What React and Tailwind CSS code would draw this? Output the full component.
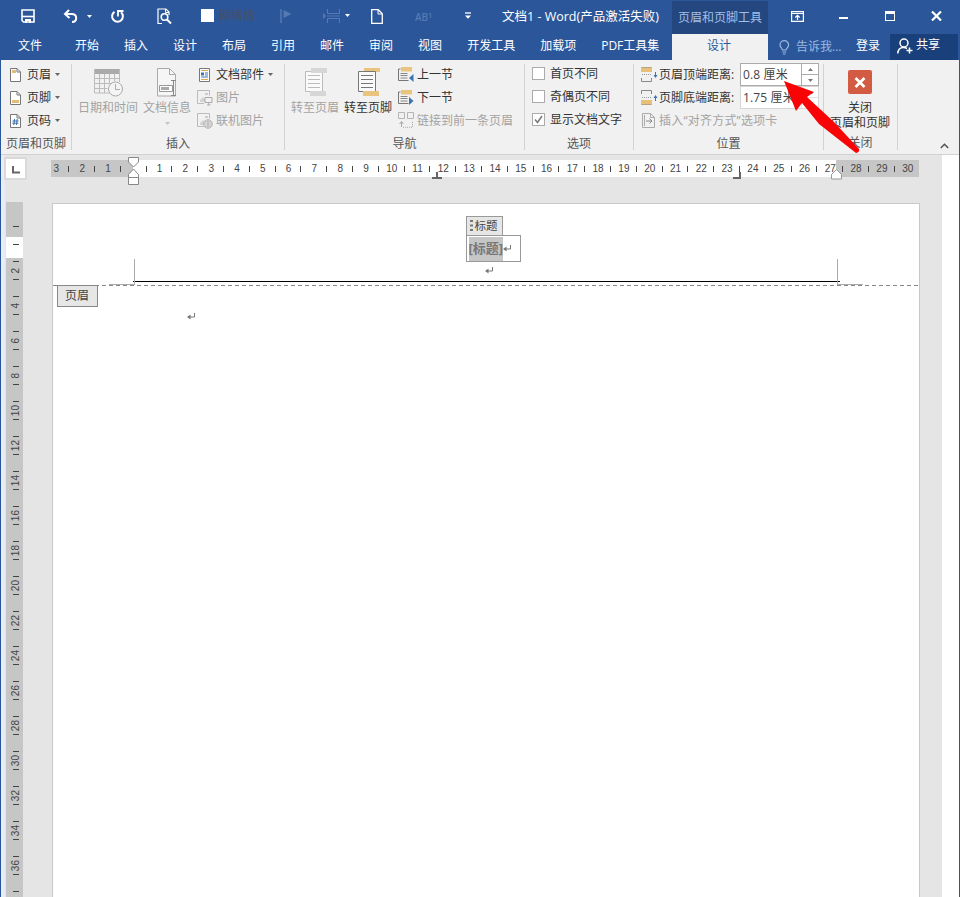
import { useState } from "react";

const tabs = ["开始", "插入", "设计", "布局", "引用", "邮件", "审阅", "视图", "开发工具", "加载项", "PDF工具集"];
const hRuler = Array.from({ length: 34 }, (_, i) => i - 3);
const vRuler = Array.from({ length: 18 }, (_, i) => (i + 1) * 2);

function Svg({ w, h, className = "", children }) {
  return (
    <svg width={w} height={h} viewBox={`0 0 ${w} ${h}`} fill="none" className={`shrink-0 ${className}`}>
      {children}
    </svg>
  );
}

function Caret({ className = "" }) {
  return (
    <Svg w={5} h={3} className={className}>
      <path d="M0 0h5L2.5 3z" fill="currentColor" />
    </Svg>
  );
}

function TitleBar() {
  return (
    <div className="flex h-[34px] items-center text-white">
      {/* Guardar */}
      <Svg w={14} h={14} className="-mt-[2px] ml-[21px]">
        <path d="M1 1h12v12H2.500L1 11.500z" stroke="currentColor" strokeWidth="1.600" />
        <path d="M1 7.500h12" stroke="currentColor" strokeWidth="1.600" />
        <path d="M4 10h6v4H8v-2H6v2H4z" fill="currentColor" />
      </Svg>
      {/* Deshacer */}
      <Svg w={15} h={14} className="-mt-[2px] ml-[28px]">
        <path d="M6 1L2 5l4.500 4M2.500 5h6c3 0 4.700 1.500 4.700 4s-1.700 4-4.200 4" stroke="currentColor" strokeWidth="2" />
      </Svg>
      <Caret className="-mt-[2px] ml-[9px]" />
      <Svg w={15} h={15} className="-mt-[2px] ml-[18px]">
        <path d="M4.500 2.800A5.400 5.400 0 1 0 11 3.200" stroke="currentColor" strokeWidth="2" />
        <path d="M8 7.500V2H13.500" stroke="currentColor" strokeWidth="1.800" />
      </Svg>
      {/* Vista previa */}
      <Svg w={15} h={17} className="-mt-[2px] ml-[32px]">
        <path d="M5 15.500H1V1h8l3 3v3" stroke="currentColor" strokeWidth="1.200" />
        <path d="M8.500 1v3.500H12" stroke="currentColor" />
        <circle cx="7.500" cy="9" r="3.300" stroke="currentColor" strokeWidth="1.600" />
        <path d="M10 11.500l4 4" stroke="currentColor" strokeWidth="2" />
      </Svg>
      <span className="-mt-[3px] ml-[29px] h-[13px] w-[13px] bg-white" />
      <span className="-mt-[2px] ml-[5px] w-[37px] font-medium text-[#45506a]">网格线</span>
      <Svg w={12} h={14} className="-mt-[3px] ml-[24px] text-[#5479b3]">
        <path d="M1 0v14" stroke="currentColor" strokeWidth="1.500" />
        <path d="M3.500 1l8 4-8 4z" fill="currentColor" />
      </Svg>
      <Svg w={18} h={14} className="-mt-[2px] ml-[31px] text-[#5479b3]">
        <path d="M4.500 0v4.500h12V0M4.500 14V9.500h12V14M4 7h13" stroke="currentColor" strokeWidth="1" />
        <path d="M0 4l3 3-3 3z" fill="currentColor" />
      </Svg>
      <Caret className="-mt-[3px] ml-[4px]" />
      <Svg w={12} h={15} className="-mt-[2px] ml-[21px]">
        <path d="M.7.700h6.600l4 4v9.600H.7z" stroke="currentColor" strokeWidth="1.300" />
        <path d="M7 1v4h4" stroke="currentColor" />
      </Svg>
      <span className="ml-[32px] w-[18px] whitespace-nowrap text-[10px] font-semibold text-[#5479b3]">
        AB<sup className="text-[7px]">1</sup>
      </span>
      <Svg w={6} h={8} className="-mt-[2px] ml-[32px]">
        <path d="M0 1h6" stroke="currentColor" strokeWidth="1.300" />
        <path d="M0 3.500h6L3 6.800z" fill="currentColor" />
      </Svg>
      <span className="ml-[31px] w-[170px] pt-px text-[12.500px]">文档1 - Word(产品激活失败)</span>
      <span className="mt-px flex h-[33px] w-[96px] items-center justify-center bg-[#24477f] text-[#a5bfe6]">
        页眉和页脚工具
      </span>
      <Svg w={13} h={11} className="-mt-[2px] ml-[23px]">
        <path d="M.6.600h11.800v9.800H.6zM.6 2.500h11.800" stroke="currentColor" strokeWidth="1.200" />
        <path d="M6.500 9V4.500M4.300 6.500l2.200-2.200 2.200 2.200" stroke="currentColor" strokeWidth="1.200" />
      </Svg>
      <span className="ml-[35px] mt-[2px] h-[2px] w-[9px] bg-white" />
      <span className="-mt-[2px] ml-[37px] h-[10px] w-[10px] border border-t-[3px] border-white" />
      <Svg w={11} h={10} className="-mt-[2px] ml-[36px]">
        <path d="M1 .5l9 9M10 .5l-9 9" stroke="currentColor" strokeWidth="2.200" />
      </Svg>
    </div>
  );
}

function TabRow() {
  return (
    <div className="flex h-[26px] text-white">
      <span className="ml-[17px] w-[57px] leading-[24px]">文件</span>
      <div className="flex w-[597px] gap-[25px] leading-[24px]">
        {tabs.map((t) => (
          <span key={t}>{t}</span>
        ))}
      </div>
      <span className="w-[96px] bg-[#f1f1f1] pr-[2px] text-center leading-[24px] text-[#2b579a]">设计</span>
      <Svg w={11} h={15} className="ml-[11px] mt-[6px] text-[#9db8e0]">
        <path d="M3.500 10c0-1.500-2.500-2.500-2.500-5a4.300 4.300 0 0 1 8.600 0c0 2.500-2.500 3.500-2.500 5zM3.500 12h3.700M4 14h2.500" stroke="currentColor" strokeWidth="1.200" />
      </Svg>
      <span className="ml-[6px] w-[56px] leading-[25px] text-[#9db8e0]">告诉我...</span>
      <span className="ml-[4px] w-[34px] leading-[24px]">登录</span>
      <div className="flex w-[68px] bg-[#19407a]">
        <Svg w={16} h={16} className="ml-[7px] mt-[4px]">
          <circle cx="7" cy="5" r="4" stroke="currentColor" strokeWidth="1.500" />
          <path d="M.8 15.500C1 11.500 3 9.500 6.500 9.500c1.500 0 2.500.400 3.500 1M12.500 9.500v6M9.500 12.500h6" stroke="currentColor" strokeWidth="1.500" />
        </Svg>
        <span className="ml-[3px] leading-[22px]">共享</span>
      </div>
    </div>
  );
}

function Group({ label, className = "", children }) {
  return (
    <div className={`relative flex shrink-0 flex-col pt-[3px] ${className}`}>
      <div className="flex h-[69px]">{children}</div>
      <div className="h-[23px] pr-px text-center leading-[24px] text-[#555]">{label}</div>
      <span className="absolute right-0 top-[4px] h-[86px] w-px bg-[#d2d2d2]" />
    </div>
  );
}

function Row({ icon, children, caret, disabled, gap = "gap-[5px]" }) {
  return (
    <div className={`flex h-[23px] items-center whitespace-nowrap ${gap} ${disabled ? "text-[#a3a3a3]" : "text-[#333]"}`}>
      {icon}
      <span>{children}</span>
      {caret && <Caret className="-ml-px text-[#666]" />}
    </div>
  );
}

function PageIcon({ type }) {
  return (
    <Svg w={11} h={14} className="mr-px">
      <path d="M.5.500h6.500l3.500 3.500v9.500H.5z" fill="#fff" stroke="#777" />
      <path d="M7 .5V4h3.500" stroke="#777" />
      {type === "head" && <path d="M2 2h4v3H2z" fill="#e3bd75" />}
      {type === "foot" && <path d="M2 9h7v3H2z" fill="#e3bd75" />}
      {type === "num" && <path d="M4.500 5L3.800 11M7.200 5l-.7 6M2.500 7h6M2.300 9.200h6" stroke="#3a6ea5" />}
    </Svg>
  );
}

function PictureIcon({ online }) {
  return (
    <Svg w={16} h={16}>
      <path d="M7 13.500H.5V.500h12v5" stroke="#bbb" />
      <path d="M3 10l3-3 2 2v3H3z" fill="#d3d3d3" />
      <path d="M8 3h3v2H8z" fill="#ccc" />
      {online ? (
        <>
          <circle cx="11" cy="11" r="4.200" fill="#f1f1f1" stroke="#aaa" />
          <path d="M7 11h8M11 7v8M8 9h6M8 13h6" stroke="#aaa" strokeWidth=".8" />
        </>
      ) : (
        <path d="M8 7.500h7v5H8zM10 15h3.500M11.700 13v2" fill="#f1f1f1" stroke="#aaa" />
      )}
    </Svg>
  );
}

function GotoIcon({ footer }) {
  const line = footer ? "#777" : "#bbb";
  const fill = footer ? "#e8c47e" : "#d6d6d6";
  return (
    <Svg w={23} h={28} className="mt-[5px]">
      <path d="M7 0h16v4H7z" fill={fill} />
      <path d="M1.500 3.500h17v20h-17z" fill="#fafafa" stroke={line} />
      {!footer && <path d="M7 0h16v5H7z" fill={fill} />}
      <path d="M4 7.500h12M4 11.500h12M4 15.500h12M4 19.500h12" stroke={line} />
      <path d="M6 23h16v5H6z" fill={fill} />
    </Svg>
  );
}

function SectionIcon({ next }) {
  return (
    <Svg w={16} h={16} className="-mt-[2px]">
      <path d="M2.500 3H.5v11.500h10" stroke="#777" />
      <path d="M2.500 7.500h7M2.500 9.500h7M2.500 12h7" stroke="#888" />
      <path d="M3 1h11v4.500H3z" fill="#e8c47e" />
      <path d={next ? "M11 8v8l4.500-4z" : "M15.500 8v8L11 12z"} fill="#3a74b5" />
    </Svg>
  );
}

function DistanceIcon({ bottom }) {
  return (
    <Svg w={17} h={15}>
      <path d="M.5 4V.500h10V4M.5 11v3.500h10V11" stroke="#888" />
      <path d="M1 7.500h10" stroke="#999" strokeDasharray="1 1" />
      <path d={bottom ? "M0 10h11v4.500H0z" : "M0 .5h11V5H0z"} fill="#e8c07a" />
      <path d={bottom ? "M14.500 11V6" : "M14.500 5v5"} stroke="#3a74b5" />
      <path d={bottom ? "M12.500 8h4l-2-3z" : "M12.500 8h4l-2 3z"} fill="#3a74b5" />
    </Svg>
  );
}

function Check({ label, checked, onChange }) {
  return (
    <button type="button" onClick={onChange} className="flex h-[23px] items-center text-[#333]">
      <span className="-mt-[2px] mr-[5px] flex h-[13px] w-[13px] items-center justify-center border border-[#ababab] bg-white">
        {checked && (
          <Svg w={9} h={9}>
            <path d="M1 4.500L3.500 7.500 8 1" stroke="#777" strokeWidth="1.500" />
          </Svg>
        )}
      </span>
      <span className="-mt-px">{label}</span>
    </button>
  );
}

function Spinner({ value, active }) {
  return (
    <div className={`flex h-[23px] w-[79px] border bg-white text-[#444] ${active ? "border-[#ababab]" : "border-[#d5d5d5]"}`}>
      <span className="w-[60px] whitespace-nowrap pl-[2px] leading-[22px] tracking-[0.15px]">{value}</span>
      <div className={`flex w-[17px] flex-col border-l text-[#777] ${active ? "border-[#ababab]" : "border-[#e1e1e1]"}`}>
        <span className={`flex h-[11px] items-center justify-center border-b ${active ? "border-[#ababab]" : "border-[#e1e1e1]"}`}>
          <Caret className="rotate-180" />
        </span>
        <span className="flex h-[10px] items-center justify-center">
          <Caret />
        </span>
      </div>
    </div>
  );
}

function Ribbon() {
  const [options, setOptions] = useState({ first: false, odd: false, text: true });
  const toggle = (key) => setOptions({ ...options, [key]: !options[key] });

  return (
    <div className="relative flex h-[95px] border-b border-[#d2d2d2] bg-[#f1f1f1]">
      <Group label="页眉和页脚" className="w-[71px]">
        <div className="pl-[9px]">
          <Row icon={<PageIcon type="head" />} caret>页眉</Row>
          <Row icon={<PageIcon type="foot" />} caret>页脚</Row>
          <Row icon={<PageIcon type="num" />} caret>页码</Row>
        </div>
      </Group>

      <Group label="插入" className="w-[213px]">
        <div className="ml-[6px] flex w-[60px] flex-col items-center text-[#a3a3a3]">
          <Svg w={30} h={29} className="mt-[5px]">
            <path d="M1 1h26v5H1z" fill="#aaa" />
            <path d="M1.500 1v24H16M1.500 10.500h25M1.500 15.500h18M1.500 20.500h13M6.500 6v19M11.500 6v19M16.500 6v9M21.500 6v7M26.500 1v13" stroke="#bbb" />
            <circle cx="22.500" cy="21" r="7" fill="#f4f4f4" stroke="#aaa" />
            <path d="M22.500 16v5.500H27" stroke="#aaa" />
          </Svg>
          <span className="mt-[2px] leading-[18px]">日期和时间</span>
        </div>
        <div className="ml-[5px] flex w-[48px] flex-col items-center text-[#a3a3a3]">
          <Svg w={22} h={29} className="mt-[5px]">
            <path d="M1.500.500h12l6 6V28h-18z" fill="#f6f6f6" stroke="#aaa" />
            <path d="M13.500.500v6h6" stroke="#aaa" />
            <path d="M3.500 17.500h13v6h-13z" fill="#fff" stroke="#999" />
            <path d="M5 19h8v3H5z" fill="#aaa" />
            <path d="M15 12.500h5M17.500 12.500v15M15 27.500h5" stroke="#888" />
          </Svg>
          <span className="mt-[2px] leading-[18px]">文档信息</span>
          <Caret className="mt-[5px] text-[#c4c4c4]" />
        </div>
        <div className="ml-[6px]">
          <Row
            gap="gap-[5px]"
            icon={
              <Svg w={11} h={14} className="ml-[2px] mr-px">
                <path d="M.5.500h10v13H.5z" fill="#fff" stroke="#777" />
                <path d="M2 2.500h7M2 11.500h7" stroke="#d9a94f" />
                <path d="M2 4.500h3v3H2z" fill="#3a74b5" />
                <path d="M6 5h3M6 7h3M2 9h7" stroke="#3a74b5" />
              </Svg>
            }
            caret
          >
            文档部件
          </Row>
          <Row gap="gap-[3px]" icon={<PictureIcon />} disabled>图片</Row>
          <Row gap="gap-[3px]" icon={<PictureIcon online />} disabled>联机图片</Row>
        </div>
      </Group>

      <Group label="导航" className="w-[240px]">
        <div className="ml-[6px] flex w-[48px] flex-col items-center text-[#a3a3a3]">
          <GotoIcon />
          <span className="mt-[3px] whitespace-nowrap leading-[18px]">转至页眉</span>
        </div>
        <div className="ml-[5px] flex w-[48px] flex-col items-center text-[#333]">
          <GotoIcon footer />
          <span className="mt-[3px] whitespace-nowrap leading-[18px]">转至页脚</span>
        </div>
        <div className="ml-[6px]">
          <Row gap="gap-[3px]" icon={<SectionIcon />}>上一节</Row>
          <Row gap="gap-[3px]" icon={<SectionIcon next />}>下一节</Row>
          <Row
            gap="gap-[3px]"
            disabled
            icon={
              <Svg w={16} h={16} className="-mt-[2px]">
                <path d="M.5.500h6v6h-6zM9.500.500h6v6h-6z" stroke="#b5b5b5" />
                <path d="M3.500 15v-5M1.500 12l2-2.500 2 2.500" stroke="#aaa" />
                <path d="M5 15.300h9.500V9" stroke="#aaa" strokeDasharray="1 1" />
              </Svg>
            }
          >
            链接到前一条页眉
          </Row>
        </div>
      </Group>

      <Group label="选项" className="w-[109px]">
        <div className="pl-[7px]">
          <Check label="首页不同" checked={options.first} onChange={() => toggle("first")} />
          <Check label="奇偶页不同" checked={options.odd} onChange={() => toggle("odd")} />
          <Check label="显示文档文字" checked={options.text} onChange={() => toggle("text")} />
        </div>
      </Group>

      <Group label="位置" className="w-[190px]">
        <div className="w-[106px] pl-[7px]">
          <Row gap="gap-px" icon={<DistanceIcon />}>页眉顶端距离:</Row>
          <Row gap="gap-px" icon={<DistanceIcon bottom />}>页脚底端距离:</Row>
          <Row
            gap="gap-[3px]"
            disabled
            icon={
              <Svg w={14} h={15} className="ml-px">
                <path d="M.5.500h8l4 4v10H.5z" stroke="#aaa" />
                <path d="M8.500.500v4h4M2.500 2v11" stroke="#aaa" />
                <path d="M4 8h6M7.500 5.500L10 8l-2.500 2.500" stroke="#888" />
              </Svg>
            }
          >
            <span className="tracking-[0.200px]">插入“对齐方式”选项卡</span>
          </Row>
        </div>
        <div>
          <Spinner value="0.8 厘米" active />
          <Spinner value="1.75 厘米" />
        </div>
      </Group>

      <Group label="关闭" className="w-[74px]">
        <div className="flex w-full flex-col items-center pr-[2px] text-[#333]">
          <span className="mt-[7px] flex h-[24px] w-[24px] items-center justify-center rounded-[2px] bg-[#d35b43]">
            <Svg w={12} h={11}>
              <path d="M1.500 1l9 9M10.500 1l-9 9" stroke="#fff" strokeWidth="2.600" />
            </Svg>
          </span>
          <span className="mt-[6px] leading-[15px]">关闭</span>
          <span className="whitespace-nowrap leading-[15px]">页眉和页脚</span>
        </div>
      </Group>

      <Svg w={9} h={6} className="ml-auto mr-[10px] mt-[83px]">
        <path d="M.8 5l3.700-3.700L8.200 5" stroke="#555" strokeWidth="1.600" />
      </Svg>

      {/* Flecha roja sobre el campo de distancia */}
      <svg width="80" height="80" viewBox="0 0 80 80" className="absolute left-[780px] top-[18px] z-10">
        <path d="M3 3l30 11-7 5 27 25 25 27q1 3-3 4L38 46 21 25l-6 8z" fill="#f90406" />
      </svg>
    </div>
  );
}

function HorizontalRuler() {
  return (
    <div className="relative ml-[24px] mt-[5px] h-[17px] w-[868px] bg-[linear-gradient(to_right,#c6c6c6_82px,#fff_82px,#fff_785px,#c6c6c6_785px)]">
      <div className="flex h-full overflow-hidden">
        <div className="-ml-[7.500px] flex shrink-0 items-center font-['Liberation_Sans'] text-[10px] text-[#444]">
          {hRuler.map((n) => (
            <div key={n} className="relative flex w-[25.800px] shrink-0 items-center justify-end">
              <span className="w-full text-center">{n === 0 ? "" : Math.abs(n)}</span>
              {n < 30 && <span className="-ml-px h-[6px] w-px shrink-0 bg-[#444]" />}
            </div>
          ))}
        </div>
      </div>
      <Svg w={11} h={28} className="absolute -top-[3px] left-[77px]">
        <path d="M.5.500h10v4.500l-5 5-5-5z" fill="#fff" stroke="#888" />
        <path d="M.5 27.500v-10l5-5.500 5 5.500v10zM.5 20.500h10" fill="#fff" stroke="#888" />
      </Svg>
      <Svg w={10} h={8} className="absolute left-[381px] top-[11px]">
        <path d="M0 7h10M5 7V1" stroke="#666" strokeWidth="2" />
      </Svg>
      <Svg w={8} h={8} className="absolute left-[682px] top-[11px]">
        <path d="M0 7h7V1" stroke="#666" strokeWidth="2" />
      </Svg>
      <Svg w={11} h={11} className="absolute left-[780px] top-[9px]">
        <path d="M.5 10V5.500l5-5 5 5V10z" fill="#fff" stroke="#999" />
      </Svg>
    </div>
  );
}

function VerticalRuler() {
  return (
    <div className="h-full w-[17px] shrink-0 overflow-hidden bg-[linear-gradient(to_bottom,#c6c6c6_35px,#fff_35px,#fff_56px,#c6c6c6_56px)] font-['Liberation_Sans'] text-[10px] text-[#444]">
      <div className="flex flex-col items-center pl-[3px]">
        <span className="mt-[24px] h-px w-[6px] bg-[#444]" />
        <span className="mb-[16px] mt-[17px] h-px w-[6px] bg-[#444]" />
        {vRuler.map((n) => (
          <div key={n} className="mb-[16px] flex h-[19px] shrink-0 flex-col items-center justify-between">
            <span className="h-px w-[6px] bg-[#444]" />
            <span className="rotate-180 leading-[12px] [writing-mode:vertical-rl]">{n}</span>
            <span className="h-px w-[6px] bg-[#444]" />
          </div>
        ))}
        <span className="h-px w-[6px] bg-[#444]" />
      </div>
    </div>
  );
}

function Mark({ className }) {
  return (
    <Svg w={8} h={7} className={className}>
      <path d="M7.500 0v4H1.500" stroke="#777" />
      <path d="M3.500 1.500v5L0 4z" fill="#777" />
    </Svg>
  );
}

function DocumentPage() {
  return (
    <div className="relative ml-[29px] mt-px w-[868px] border border-b-0 border-[#c9c9c9] bg-white">
      {/* Zona de encabezado */}
      <div className="relative h-[82px]">
        <div className="flex flex-col items-center pt-[12px]">
          <div className="ml-[14px] w-[55px]">
            <div className="flex h-[20px] w-[37px] items-center border border-[#999] bg-[#e6e6e6] pl-[3px] text-[11.500px] text-[#444]">
              <Svg w={4} h={12} className="mr-px">
                <path d="M0 1h3M0 5.500h3M0 10h3" stroke="#777" strokeWidth="2" />
              </Svg>
              标题
            </div>
            <div className="-mt-px flex h-[27px] items-center border border-[#999] pl-[2px]">
              <span className="flex h-[24px] items-center whitespace-nowrap bg-[#c6c6c6] text-[13px] font-bold text-[#777]">[标题]</span>
              <Mark />
            </div>
          </div>
          <Mark className="ml-[6px] mt-[5px]" />
        </div>
        <span className="absolute bottom-0 left-0 h-px w-full bg-[repeating-linear-gradient(to_right,#888_0_4px,#fff_4px_7px)]" />
        <span className="absolute bottom-[4px] left-[80px] h-px w-[707px] bg-black" />
        <span className="absolute bottom-px left-[56px] h-[26px] w-[26px] border-b border-r border-[#aaa]" />
        <span className="absolute bottom-px left-[784px] h-[26px] w-[26px] border-b border-l border-[#aaa]" />
      </div>
      <div className="absolute left-[4px] top-[81px] flex h-[22px] w-[41px] items-center justify-center border border-[#888] bg-[#e6e6e6] pr-px text-[#444]">
        页眉
      </div>
      <Mark className="ml-[134px] mt-[27px]" />
    </div>
  );
}

export default function App() {
  return (
    <div className="flex h-[897px] w-[960px] flex-col overflow-hidden bg-[#2b579a] font-['Open_Sans','Noto_Sans_CJK_SC',sans-serif] text-[12px] leading-none">
      <TitleBar />
      <div className="ml-px">
        <TabRow />
      </div>
      <div className="mx-px flex min-h-0 flex-1 flex-col">
        <Ribbon />
        <div className="flex min-h-0 flex-1 bg-[#e5e5e5]">
          <div className="w-[5px] border-r border-[#e0e5ec] bg-[#e8edf5]" />
          <div className="flex w-[936px] flex-col">
            <div className="flex h-[47px] shrink-0">
              <div className="-ml-[2px] mt-[2px] flex h-[23px] w-[23px] items-center justify-center border-2 border-[#dadada] bg-white">
                <Svg w={8} h={8} className="mt-[3px]">
                  <path d="M1 0v6.500h7" stroke="#666" strokeWidth="2" />
                </Svg>
              </div>
              <HorizontalRuler />
            </div>
            <div className="flex min-h-0 flex-1">
              <VerticalRuler />
              <DocumentPage />
            </div>
          </div>
          <div className="flex-1 bg-white" />
        </div>
      </div>
    </div>
  );
}
